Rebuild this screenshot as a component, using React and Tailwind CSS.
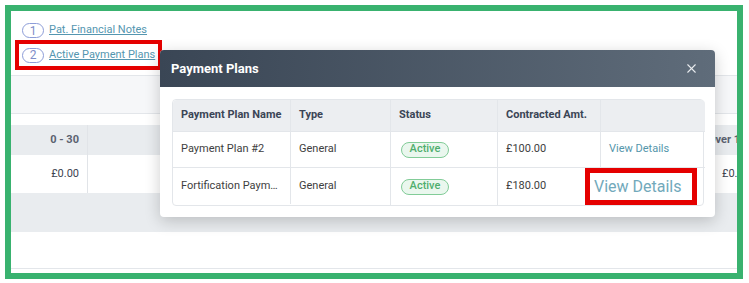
import { X } from "lucide-react";

const bgCols = [77, 102, 102, 102, 102, 102, 102, 140];

const plans = [
    { name: "Payment Plan #2", type: "General", amount: "£100.00", big: false },
    { name: "Fortification Paym…", type: "General", amount: "£180.00", big: true },
];

const Badge = ({ n }) => (
    <span className="flex h-[15px] w-[22px] items-center justify-center rounded-full border border-[#8d9dd8] text-[12px] leading-none text-[#7e8dc9]">
        {n}
    </span>
);

const BgRow = ({ className, cells }) => (
    <div className={`flex ${className}`}>
        {bgCols.map((w, i) => (
            <div
                key={i}
                style={{ width: w }}
                className={`flex shrink-0 items-center ${i === 0 ? "justify-end pr-[8px] border-r border-[#e1e4e8]" : ""}`}
            >
                {cells[i]}
            </div>
        ))}
    </div>
);

export default function App() {
    return (
        <div className="h-[283px] w-[749px] bg-white p-[5px] font-['Roboto',sans-serif]">
            <div className="relative h-[274px] w-[738px] overflow-hidden border-[6px] border-[#39b26f] bg-white">
                {/* links */}
                <div className="h-[65px] border-b border-[#e3e6ea] pl-[11px] pt-[12px]">
                    <div className="flex h-[15px] items-center gap-[5px]">
                        <Badge n="1" />
                        <a href="#" className="text-[11px] text-[#5496b0] underline">
                            Pat. Financial Notes
                        </a>
                    </div>
                    <div className="-ml-[7px] mt-[2px] flex h-[30px] w-[147px] items-center gap-[5px] border-4 border-[#e50000] pl-[3px]">
                        <Badge n="2" />
                        <a href="#" className="text-[11px] text-[#5496b0] underline">
                            Active Payment Plans
                        </a>
                    </div>
                </div>
                <div className="h-[38px] border-b border-[#e3e6ea] bg-[#f6f7f9]" />

                {/* background table */}
                <div className="mt-[11px]">
                    <BgRow
                        className="h-[30px] bg-[#e9ecef] text-[11px] font-bold text-[#5b6270]"
                        cells={["0 - 30", "", "", "", "", "", "", <span className="pl-[8px] whitespace-nowrap">Over 120</span>]}
                    />
                    <BgRow
                        className="h-[38px] text-[11px] text-[#3d4350]"
                        cells={["£0.00", "", "", "", "", "", "", <span className="pl-[22px]">£0.00</span>]}
                    />
                    <div className="h-[39px] bg-[#e9ecef]" />
                    <div className="h-[37px] border-b border-[#e3e6ea]" />
                </div>

                {/* modal */}
                <div className="absolute left-[149px] top-[39px] w-[555px] rounded-[4px] bg-white shadow-[0_4px_16px_rgba(0,0,0,0.2)]">
                    <div className="flex h-[37px] items-center justify-between rounded-t-[4px] bg-gradient-to-r from-[#3a4655] to-[#5f6c7a] pl-[11px] pr-[16px]">
                        <span className="text-[13px] font-bold text-white">Payment Plans</span>
                        <X size={15} strokeWidth={1.75} className="text-[#e8ebef]" />
                    </div>
                    <div className="p-[12px] pr-[11px] pb-[11px]">
                        <div className="grid grid-cols-[118px_100px_107px_103px_104px] rounded-[4px] border border-[#e3e6ea] text-[11px]">
                            {["Payment Plan Name", "Type", "Status", "Contracted Amt.", ""].map((h, i) => (
                                <div
                                    key={i}
                                    className={`flex h-[31px] items-center bg-[#eceef1] pl-[8px] font-bold text-[#3b4556] ${i < 4 ? "border-r border-[#e3e6ea]" : ""} ${i === 0 ? "rounded-tl-[4px]" : ""} ${i === 4 ? "rounded-tr-[4px]" : ""}`}
                                >
                                    {h}
                                </div>
                            ))}
                            {plans.map((p, r) => (
                                <div key={r} className="contents">
                                    <div className={`flex ${r ? "h-[37px]" : "h-[36px]"} items-center border-r border-t border-[#e3e6ea] pl-[8px] text-[#3e3e3e]`}>
                                        {p.name}
                                    </div>
                                    <div className="flex items-center border-r border-t border-[#e3e6ea] pl-[8px] text-[#3e3e3e]">
                                        {p.type}
                                    </div>
                                    <div className="flex items-center border-r border-t border-[#e3e6ea] pl-[10px]">
                                        <span className="flex h-[16px] w-[48px] items-center justify-center rounded-full border border-[#82cc98] bg-[#eaf7ee] text-[11px] font-medium text-[#4fae6d]">
                                            Active
                                        </span>
                                    </div>
                                    <div className="flex items-center border-r border-t border-[#e3e6ea] pl-[8px] text-[#3e3e3e]">
                                        {p.amount}
                                    </div>
                                    <div className="flex items-center border-t border-[#e3e6ea] pl-[8px]">
                                        {p.big ? (
                                            <span className="-ml-[24px] flex h-[37px] w-[112px] items-center border-[5px] border-[#e50000] bg-white pl-[4px] text-[16px] text-[#72a9bb]">
                                                View Details
                                            </span>
                                        ) : (
                                            <a href="#" className="text-[#5496ab]">
                                                View Details
                                            </a>
                                        )}
                                    </div>
                                </div>
                            ))}
                        </div>
                    </div>
                </div>
            </div>
        </div>
    );
}
